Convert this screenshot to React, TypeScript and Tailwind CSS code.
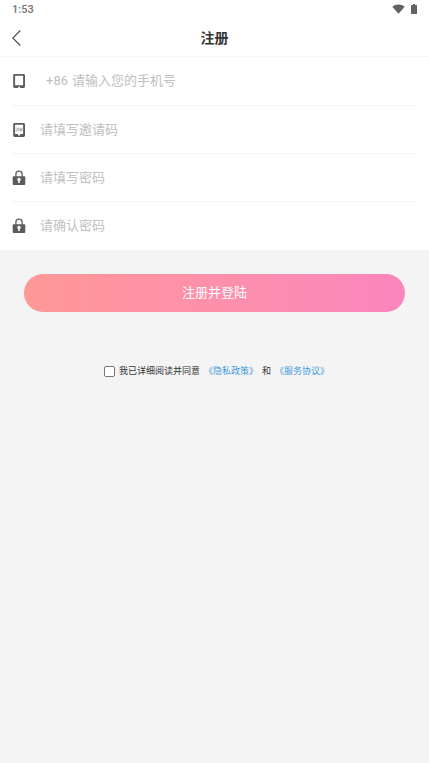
import { useState, type ReactNode } from 'react';

function PhoneIcon() {
  return (
    <svg viewBox="0 0 14 16" className="h-4 w-3.5" aria-hidden="true">
      <path
        fill="#5c5c5c"
        fillRule="evenodd"
        d="M2.600 1h9c.8 0 1.400.6 1.400 1.400v11.200c0 .8-.6 1.400-1.400 1.400H8v-1.200H6.200V15H2.600c-.8 0-1.400-.6-1.400-1.400V2.400C1.200 1.600 1.800 1 2.600 1zM3.100 2.700v9.600h8V2.700z"
      />
    </svg>
  );
}

function InviteIcon() {
  return (
    <svg viewBox="0 0 14 16" className="h-4 w-3.5" aria-hidden="true">
      <path
        fill="#5c5c5c"
        fillRule="evenodd"
        d="M2.600 1h9c.8 0 1.400.6 1.400 1.400v11.200c0 .8-.6 1.400-1.400 1.400H2.600c-.8 0-1.400-.6-1.400-1.400V2.400C1.200 1.600 1.800 1 2.600 1zM3.100 2.700v9.300h3v1.600h2V12h3V2.700z"
      />
      <path
        d="M4.400 6.200h1.800v3M4.400 7.600v1.800M8 5.800v3.600M8 7.500h1.800M9.800 5.800v3.600"
        fill="none"
        stroke="#999"
        strokeWidth="0.9"
      />
    </svg>
  );
}

function LockIcon() {
  return (
    <svg viewBox="0 0 14 16" className="h-4 w-3.5" aria-hidden="true">
      <path d="M3.900 7V4.300a3.100 3.100 0 0 1 6.200 0V7" fill="none" stroke="#5c5c5c" strokeWidth="1.300" />
      <rect x="0.700" y="6.300" width="12.600" height="8.700" rx="0.900" fill="#5c5c5c" />
      <circle cx="7" cy="9.500" r="1.700" fill="#fff" />
      <path d="M6.200 10h1.600v3H6.200z" fill="#fff" />
    </svg>
  );
}

type Field = {
  id: string;
  type: string;
  label: string;
  icon: ReactNode;
  prefix?: string;
};

const fields: Field[] = [
  { id: 'phone', type: 'tel', label: '请输入您的手机号', icon: <PhoneIcon />, prefix: '+86' },
  { id: 'invite', type: 'text', label: '请填写邀请码', icon: <InviteIcon /> },
  { id: 'password', type: 'password', label: '请填写密码', icon: <LockIcon /> },
  { id: 'confirm', type: 'password', label: '请确认密码', icon: <LockIcon /> },
];

function StatusBar() {
  return (
    <div className="flex h-5 items-center justify-between px-3 text-[11px] font-medium text-[#757575]">
      <span>1:53</span>
      <div className="flex items-center gap-1.5 pb-0.5">
        <svg viewBox="0 0 13 10" className="h-2.5 w-[13px]" aria-hidden="true">
          <path d="M.3 2.700C4-.3 9-.3 12.700 2.700L6.500 9.800z" fill="#626262" />
        </svg>
        <svg viewBox="0 0 6 10" className="h-2.5 w-1.5" aria-hidden="true">
          <path d="M2 0h2v1h1.500q.5 0 .5.500v8q0 .5-.5.500h-5Q0 10 0 9.500v-8Q0 1 .5 1H2z" fill="#626262" />
        </svg>
      </div>
    </div>
  );
}

export default function App() {
  const [agreed, setAgreed] = useState(false);

  return (
    <div className="min-h-screen bg-[#f4f4f4] font-[Roboto,'Noto_Sans_CJK_SC',sans-serif]">
      <header className="border-b border-[#f5f5f5] bg-white">
        <StatusBar />
        <div className="grid h-9 grid-cols-[1fr_auto_1fr] items-center px-3">
          <button type="button" aria-label="返回" className="justify-self-start">
            <svg viewBox="0 0 9 16" className="h-4 w-[9px]" aria-hidden="true">
              <path d="M8.300.5.8 8l7.500 7.500" fill="none" stroke="#4a4a4a" strokeWidth="1.100" />
            </svg>
          </button>
          <h1 className="text-[14px] font-bold text-[#333]">注册</h1>
        </div>
      </header>

      <form onSubmit={(e) => e.preventDefault()}>
        <div className="bg-white px-3">
          {fields.map((field) => (
            <div
              key={field.id}
              className="flex h-12 items-center border-b border-[#f5f5f5] text-[13px] text-[#c0c0c0] first:h-[49px] last:border-b-0"
            >
              <label htmlFor={field.id} aria-label={field.label} className="mr-3.5 flex items-center">
                {field.icon}
              </label>
              {field.prefix && <span className="ml-1.5 mr-1">{field.prefix}</span>}
              <input
                id={field.id}
                type={field.type}
                placeholder={field.label}
                className="min-w-0 flex-1 bg-transparent text-[#333] outline-none placeholder:text-[#c0c0c0]"
              />
            </div>
          ))}
        </div>

        <div className="px-6 pt-6">
          <button
            type="submit"
            className="h-[38px] w-full rounded-full bg-linear-to-r from-[#fe9896] to-[#fb86bd] text-[13px] text-white"
          >
            注册并登陆
          </button>
        </div>

        <div className="mt-[51px] flex items-center justify-center gap-1 pl-1 text-[9px] leading-4 text-[#333]">
          <input
            id="agree"
            type="checkbox"
            checked={agreed}
            onChange={(e) => setAgreed(e.target.checked)}
            className="size-[11px] appearance-none rounded-xs border border-[#777] bg-white checked:bg-[#3e9ade]"
          />
          <label htmlFor="agree">我已详细阅读并同意</label>
          <a href="#privacy" className="text-[#3e9ade]">《隐私政策》</a>
          <span>和</span>
          <a href="#terms" className="text-[#3e9ade]">《服务协议》</a>
        </div>
      </form>
    </div>
  );
}
